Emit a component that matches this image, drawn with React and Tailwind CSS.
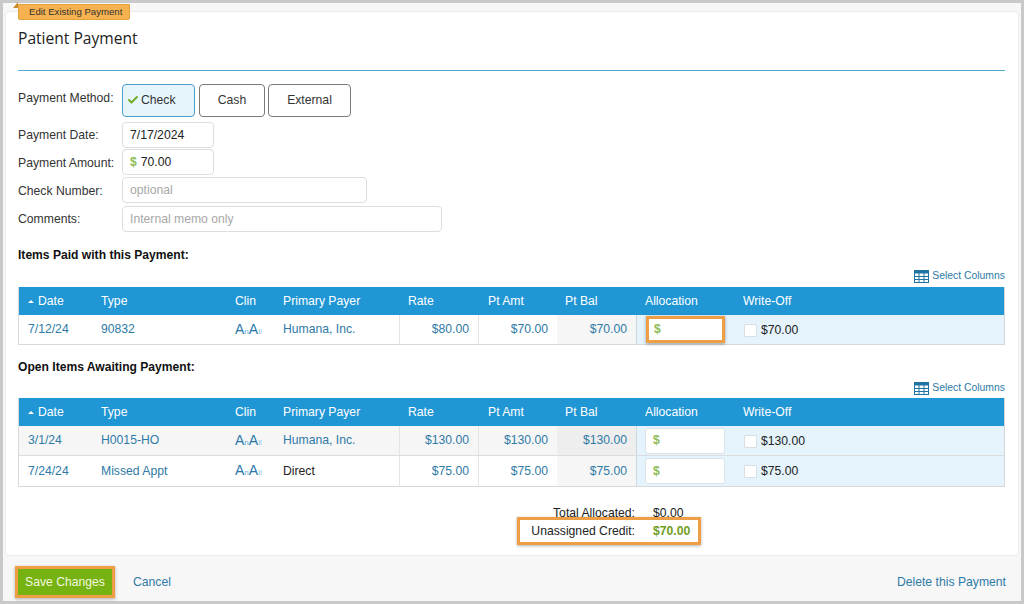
import React from "react";
import { Check } from "lucide-react";

const cols = "grid grid-cols-[82px_134px_48px_116px_79px_79px_79px_107px_1fr]";

function Clin() {
  return (
    <span className="mb-[2px] text-[#2b78a8] text-[14px] leading-none">
      A<span className="text-[8px] text-[#5fa8d2]">n</span>A<span className="text-[8px] text-[#8fc4e2]">ll</span>
    </span>
  );
}

function SelectColumns() {
  return (
    <div className="flex justify-end items-center gap-[3px] h-[14px] text-[10.4px] text-[#2d7aa8]">
      <svg width="15" height="13" viewBox="0 0 15 13" className="block">
        <rect x="0.5" y="0.5" width="14" height="12" fill="none" stroke="#1f74a3" />
        <rect x="0.5" y="0.5" width="14" height="3" fill="#1f74a3" />
        <path d="M5 3v9M10 3v9M1 6.5h13M1 9.5h13" stroke="#1f74a3" strokeWidth="1" />
      </svg>
      <span>Select Columns</span>
    </div>
  );
}

function Header() {
  const item = "flex items-center";
  return (
    <div className={`${cols} h-[28px] bg-[#2096d5] text-white text-[12.2px]`}>
      <div className={`${item} pl-[9px] gap-[4px]`}>
        <span className="w-0 h-0 border-x-[3px] border-x-transparent border-b-[3px] border-b-white" />
        <span>Date</span>
      </div>
      <div className={item}>Type</div>
      <div className={item}>Clin</div>
      <div className={item}>Primary Payer</div>
      <div className={`${item} pl-[9px]`}>Rate</div>
      <div className={`${item} pl-[10px]`}>Pt Amt</div>
      <div className={`${item} pl-[8px]`}>Pt Bal</div>
      <div className={`${item} pl-[9px]`}>Allocation</div>
      <div className={item}>Write-Off</div>
    </div>
  );
}

function Row({ date, type, payer, direct, rate, amt, bal, writeOff, alt, highlight, last, tall }) {
  const link = "text-[#2f7aa6]";
  return (
    <div className={`${cols} ${tall ? "h-[29px]" : "h-[30px]"} items-stretch text-[12.2px] ${last ? "" : "border-b border-[#dcdcdc]"} ${alt ? "bg-[#f6f6f6]" : "bg-white"}`}>
      <div className={`flex items-center pl-[9px] ${link}`}>{date}</div>
      <div className={`flex items-center ${link}`}>{type}</div>
      <div className="flex items-center"><Clin /></div>
      <div className={`flex items-center ${direct ? "text-[#222]" : link}`}>{payer}</div>
      <div className={`flex items-center justify-end pr-[9px] border-l border-[#e4e4e4] ${link}`}>{rate}</div>
      <div className={`flex items-center justify-end pr-[9px] border-l border-[#e4e4e4] ${link}`}>{amt}</div>
      <div className={`flex items-center justify-end pr-[9px] ${alt ? "bg-[#eeeeee]" : "bg-[#f6f6f6]"} ${link}`}>{bal}</div>
      <div className={`flex items-center ${highlight ? "pl-[9px]" : "pl-[8px]"} bg-[#e4f3fc] border-l border-[#cfd8de]`}>
        {highlight ? (
          <div className="w-[79px] h-[27px] bg-white border-[3px] border-[#ee9f45] shadow-[0_1px_3px_rgba(0,0,0,0.35)] flex items-center pl-[5px] font-bold text-[#8dbb55]">$</div>
        ) : (
          <div className="w-[80px] h-[26px] bg-white rounded-[3px] border border-[#dbe3e8] flex items-center pl-[7px] font-bold text-[#8dbb55]">$</div>
        )}
      </div>
      <div className="flex items-center gap-[4px] pl-px pt-[1px] bg-[#e4f3fc] text-[#222]">
        <span className="w-[13px] h-[13px] bg-white border border-[#d8dfe3] rounded-[1px]" />
        <span>{writeOff}</span>
      </div>
    </div>
  );
}

function Field({ label, children, className = "", labelClass = "pt-[5px]" }) {
  return (
    <div className={`flex ${className}`}>
      <div className={`w-[104px] shrink-0 text-[12.2px] text-[#333] ${labelClass}`}>{label}</div>
      {children}
    </div>
  );
}

const input = "h-[26px] bg-white border border-[#dedede] rounded-[4px] flex items-center px-[7px] text-[12.2px]";

export default function App() {
  return (
    <div className="w-[1024px] h-[604px] overflow-hidden bg-[#c9c9c9] p-[3px] font-['Liberation_Sans',Arial,sans-serif]">
      <div className="relative h-[598px] bg-[#f7f7f7] flex flex-col">
        <div className="absolute left-[10px] top-[-1px] w-0 h-0 border-l-[5px] border-l-transparent border-b-[6px] border-b-[#c98a2e]" />
        <div className="absolute left-[15px] top-[1px] w-[112px] h-[16px] bg-[#f6b24f] border border-[#e3a23f] rounded-b-[2px] text-[9.6px] whitespace-nowrap text-[#333] flex items-center pl-[10px]">
          Edit Existing Payment
        </div>

        <div className="mt-[8px] mx-[2px] h-[545px] bg-white border border-[#ececec] rounded-[4px] pl-[12px] pr-[13px] flex flex-col">
          <h1 className="mt-[16px] h-[20px] leading-[20px] font-['Open_Sans',sans-serif] text-[15.6px] text-[#222]">Patient Payment</h1>
          <div className="mt-[22px] h-px bg-[#53a8d0]" />

          <div className="mt-[13px] flex">
            <div className="w-[104px] pt-[5px] text-[12.2px] text-[#333]">Payment Method:</div>
            <div className="flex gap-[3px] text-[12.2px] text-[#333]">
              <div className="w-[73px] h-[33px] pb-[1px] bg-[#e6f4fc] border border-[#4d9fcb] rounded-[4px] flex items-center pl-[4px] gap-[2px] mr-px">
                <Check size={12} strokeWidth={4} className="text-[#74ad2c]" />
                Check
              </div>
              <div className="w-[66px] h-[33px] pb-[1px] bg-white border border-[#7a7a7a] rounded-[4px] flex items-center justify-center">Cash</div>
              <div className="w-[83px] h-[33px] pb-[1px] bg-white border border-[#7a7a7a] rounded-[4px] flex items-center justify-center">External</div>
            </div>
          </div>

          <Field label="Payment Date:" className="mt-[5px]" labelClass="pt-[4px]">
            <div className={`${input} w-[92px] text-[#222]`}>7/17/2024</div>
          </Field>
          <Field label="Payment Amount:" className="mt-[1px]">
            <div className={`${input} w-[92px] text-[#222] gap-[4px]`}>
              <span className="font-bold text-[#8dbb55]">$</span>70.00
            </div>
          </Field>
          <Field label="Check Number:" className="mt-[2px]">
            <div className={`${input} w-[245px] text-[#a8a8a8]`}>optional</div>
          </Field>
          <Field label="Comments:" className="mt-[3px]" labelClass="pt-[4px]">
            <div className={`${input} w-[320px] text-[#a8a8a8]`}>Internal memo only</div>
          </Field>

          <h2 className="mt-[16px] h-[14px] leading-[14px] text-[12.1px] font-bold text-[#111]">Items Paid with this Payment:</h2>
          <div className="mt-[7px]"><SelectColumns /></div>
          <div className="mt-[4px] border-b border-x border-[#d8d8d8]">
            <Header />
            <Row tall date="7/12/24" type="90832" payer="Humana, Inc." rate="$80.00" amt="$70.00" bal="$70.00" writeOff="$70.00" highlight last />
          </div>

          <h2 className="mt-[15px] h-[14px] leading-[14px] text-[12.1px] font-bold text-[#111]">Open Items Awaiting Payment:</h2>
          <div className="mt-[7px]"><SelectColumns /></div>
          <div className="mt-[3px] border-b border-x border-[#d8d8d8]">
            <Header />
            <Row date="3/1/24" type="H0015-HO" payer="Humana, Inc." rate="$130.00" amt="$130.00" bal="$130.00" writeOff="$130.00" alt />
            <Row date="7/24/24" type="Missed Appt" payer="Direct" direct rate="$75.00" amt="$75.00" bal="$75.00" writeOff="$75.00" last />
          </div>

          <div className="mt-[19px] ml-[499px] w-[184px] flex flex-col text-[12.2px] text-[#222]">
            <div className="flex h-[14px] leading-[14px]">
              <span className="w-[118px] text-right">Total Allocated:</span>
              <span className="ml-[18px]">$0.00</span>
            </div>
            <div className="flex items-center h-[28px] mt-[-3px] border-[3px] border-[#ee9f45] shadow-[0_1px_3px_rgba(0,0,0,0.3)]">
              <span className="w-[115px] text-right">Unassigned Credit:</span>
              <span className="ml-[18px] font-bold text-[#6f9e1e]">$70.00</span>
            </div>
          </div>
        </div>

        <div className="flex-1 flex items-end px-[12px] pb-[3px] text-[12.2px] text-[#2f7aa6]">
          <div className="w-[100px] h-[32px] bg-[#76b312] border-[3px] border-[#ee9f45] shadow-[0_1px_3px_rgba(0,0,0,0.3)] flex items-center justify-center text-[#f2f7df]">Save Changes</div>
          <span className="ml-[18px] h-[32px] leading-[32px]">Cancel</span>
          <span className="ml-auto mr-[3px] h-[32px] leading-[32px]">Delete this Payment</span>
        </div>
      </div>
    </div>
  );
}
